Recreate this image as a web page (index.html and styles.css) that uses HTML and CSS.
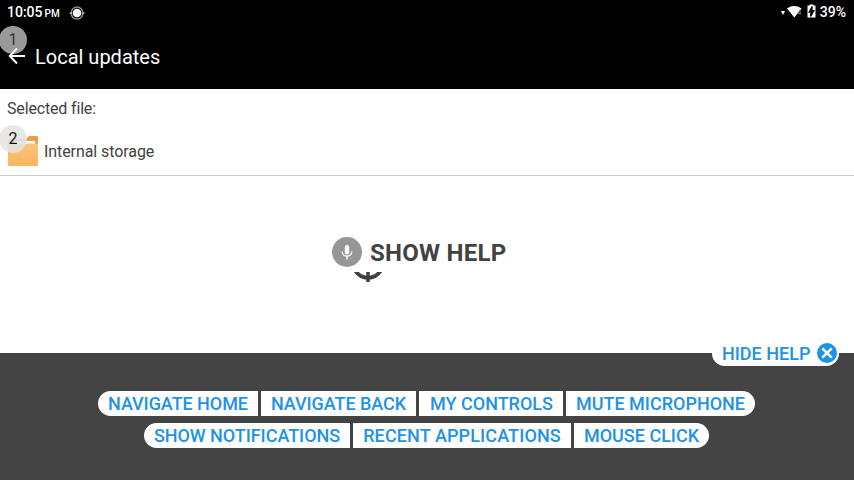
FILE: index.html
```html
<!DOCTYPE html>
<html lang="en">
<head>
<meta charset="utf-8">
<title>Local updates</title>
<link rel="stylesheet" href="styles.css">
</head>
<body>
<header class="top">
  <div class="status">
    <span class="time">10:05</span><span class="pm">PM</span>
    <svg class="target" width="16" height="16" viewBox="0 0 16 16"><circle cx="8" cy="8" r="5.900" fill="none" stroke="#888" stroke-width="1.500"/><path d="M.7 8H3M13 8h2.300" stroke="#aaa" stroke-width="2"/><circle cx="8" cy="8" r="4.300" fill="#fff"/></svg>
    <span class="spacer"></span>
    <svg class="signals" width="36" height="18" viewBox="0 0 36 18"><path d="M1 8h4L3 12zM7 5.500Q14 .7 21.500 5.500L14.300 14.500z" fill="#fff"/><path d="M20.200 7L17.800 10.500h3.200M20.100 7v5" fill="none" stroke="#777" stroke-width=".9"/><path d="M29.500 1.500h4v1H35.500v12h-8V2.500h2z" fill="#fff"/><path d="M32.200 3.500L29.300 9h2L30.500 13.300l3.200-5.500h-2z" fill="#fff" stroke="#000" stroke-width="1.500"/></svg>
    <span class="battery">39%</span>
  </div>
  <div class="appbar">
    <svg class="back" width="18" height="18" viewBox="0 0 18 18"><path d="M17 9H2M9 1.500L1.700 9 9 16.500" fill="none" stroke="#fff" stroke-width="1.900"/></svg>
    <h1>Local updates</h1>
  </div>
  <span class="badge badge-dark">1</span>
</header>
<main>
  <p class="label">Selected file:</p>
  <div class="file">
    <svg class="folder" width="30" height="30" viewBox="0 0 30 30"><defs><linearGradient id="f" x2="0" y2="1"><stop offset="0" stop-color="#fcc57c"/><stop offset="1" stop-color="#f8b55f"/></linearGradient></defs><path d="M0 3h18l3-3h8l1 1v12H0z" fill="#ee9d43"/><path d="M1 5h26v5H1z" fill="#fff"/><path d="M0 7.500h30v21.500q0 1-1 1H1q-1 0-1-1z" fill="url(#f)"/></svg>
    <span>Internal storage</span>
    <span class="badge badge-light">2</span>
  </div>
  <div class="voice">
    <div class="prompt">
      <svg width="30" height="30" viewBox="0 0 30 30"><circle cx="15" cy="15" r="15" fill="#969696"/><rect x="12.800" y="8" width="4.400" height="9.500" rx="2.200" fill="#fff"/><path d="M10.200 14.500c0 6.200 9.600 6.200 9.600 0M15 19v3.500" fill="none" stroke="#fff" stroke-width="1.300"/></svg>
      <span>SHOW HELP</span>
    </div>
    <svg class="mic-base" width="30" height="10" viewBox="0 0 30 10"><path d="M2.500-1Q7 5.800 15 5.800T27.500-1" fill="none" stroke="#424242" stroke-width="4"/><path d="M15 0v10" stroke="#424242" stroke-width="3.500"/></svg>
  </div>
</main>
<footer class="panel">
  <div class="hide"><span>HIDE HELP</span><svg class="close" width="20" height="20" viewBox="0 0 20 20"><circle cx="10" cy="10" r="10" fill="#1e92e6"/><path d="M5.300 5.300l9.400 9.400M14.700 5.300l-9.400 9.400" stroke="#fff" stroke-width="2.500"/></svg></div>
  <div class="row"><span class="cmd home">NAVIGATE HOME</span><span class="cmd nav-back">NAVIGATE BACK</span><span class="cmd controls">MY CONTROLS</span><span class="cmd mute">MUTE MICROPHONE</span></div>
  <div class="row second"><span class="cmd notify">SHOW NOTIFICATIONS</span><span class="cmd recent">RECENT APPLICATIONS</span><span class="cmd mouse">MOUSE CLICK</span></div>
</footer>
</body>
</html>
```
FILE: styles.css
```css
* { box-sizing: border-box; }
body { margin: 0; width: 854px; height: 480px; overflow: hidden; display: flex; flex-direction: column; background: #fff; color: #424242; font-family: Roboto, sans-serif; }
svg { display: block; flex: none; }
.top { position: relative; height: 89px; background: #000; color: #fff; }
.status { display: flex; align-items: center; height: 24px; padding: 0 8px 0 7px; font-size: 14px; font-weight: 500; }
.pm { font-size: 10px; margin: 3px 0 0 2px; }
.target { margin: 1px 0 0 9px; }
.spacer { flex: 1; }
.signals { margin-right: 4px; }
.appbar { display: flex; align-items: center; height: 66px; padding: 0 0 0 8px; }
.back { position: relative; z-index: 2; margin-top: -2px; }
h1 { margin: 0 0 0 9px; font-size: 20px; font-weight: 400; line-height: 24px; }
.badge { position: absolute; left: -1px; width: 28px; height: 28px; border-radius: 50%; text-align: center; font-size: 16px; line-height: 28px; letter-spacing: 0; }
.badge-dark { top: 26px; background: #999; color: #333; }
.badge-light { top: -2px; background: rgba(228, 228, 228, .85); color: #111; }
main { height: 264px; }
.label { margin: 0; height: 38px; padding: 10px 7px 0; font-size: 16px; line-height: 19px; letter-spacing: -.16px; }
.file { position: relative; display: flex; height: 49px; padding: 9px 8px 0; border-bottom: 1px solid #ccc; font-size: 16px; line-height: 31px; letter-spacing: -.08px; gap: 6px; }
.voice { padding: 61px 0 0 332px; }
.prompt { display: flex; height: 35px; gap: 8px; font-size: 24px; font-weight: 700; line-height: 32px; letter-spacing: .27px; }
.mic-base { margin-left: 21px; }
.panel { position: relative; height: 127px; padding-top: 38px; background: #444; color: #1e92e6; font-size: 18px; font-weight: 500; white-space: nowrap; }
.hide { position: absolute; right: 15px; top: -12px; width: 127px; height: 25px; display: flex; align-items: center; justify-content: space-between; padding: 0 2px 0 10px; background: #fff; border-radius: 13px; line-height: 25px; }
.close { margin-bottom: 1px; }
.row { display: flex; justify-content: center; gap: 3px; height: 25px; padding-right: 1px; }
.second { margin-top: 7px; }
.cmd { height: 25px; text-align: center; line-height: 26px; background: #fff; }
.cmd:first-child { border-radius: 13px 0 0 13px; }
.cmd:last-child { border-radius: 0 13px 13px 0; }
.home { width: 160px; letter-spacing: -.05px; }
.nav-back { width: 155px; letter-spacing: -.05px; }
.controls { width: 144px; padding-left: 1px; }
.mute { width: 189px; }
.notify { width: 206px; letter-spacing: -.04px; }
.recent { width: 218px; letter-spacing: .12px; }
.mouse { width: 135px; }
```
